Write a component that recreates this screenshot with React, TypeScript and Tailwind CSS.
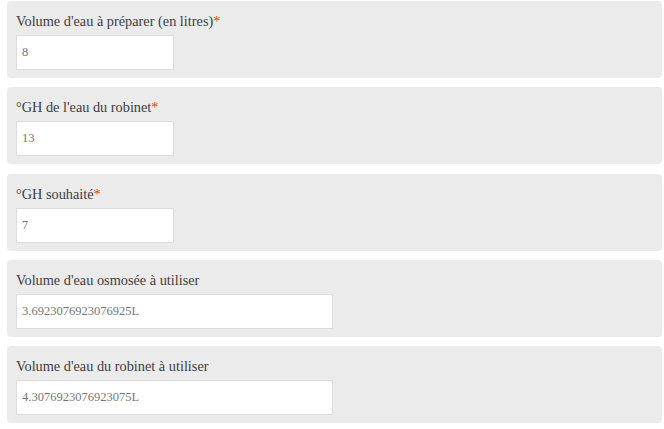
import React from "react";

type Field = { label: string; value: string; required?: boolean; wide?: boolean };

const fields: Field[] = [
  { label: "Volume d'eau à préparer (en litres)", value: "8", required: true },
  { label: "°GH de l'eau du robinet", value: "13", required: true },
  { label: "°GH souhaité", value: "7", required: true },
  { label: "Volume d'eau osmosée à utiliser", value: "3.6923076923076925L", wide: true },
  { label: "Volume d'eau du robinet à utiliser", value: "4.3076923076923075L", wide: true },
];

export default function App() {
  return (
    <div
      className="w-[664px] h-[429px] bg-white pt-[1px] pl-[7px] pr-[2px] flex flex-col gap-[9.3px] overflow-hidden"
      style={{ fontFamily: '"Liberation Serif", "DejaVu Serif", serif' }}
    >
      {fields.map((f) => (
        <div key={f.label} className="bg-[#ebebeb] rounded-[4px] px-[9px] pt-[9px] pb-[8px]">
          <label className="block h-[25px] leading-[22px] text-[14.3px] text-[#3d3d3d]">
            {f.label}
            {f.required && <span className="text-[#e2401c]">*</span>}
          </label>
          <input
            readOnly
            value={f.value}
            className={`block h-[35px] bg-white border border-[#dcdcdc] px-[5px] text-[12.5px] text-[#777] outline-none ${
              f.wide ? "w-[317px]" : "w-[158px]"
            }`}
            style={{ fontFamily: '"Liberation Serif", "DejaVu Serif", serif' }}
          />
        </div>
      ))}
    </div>
  );
}
